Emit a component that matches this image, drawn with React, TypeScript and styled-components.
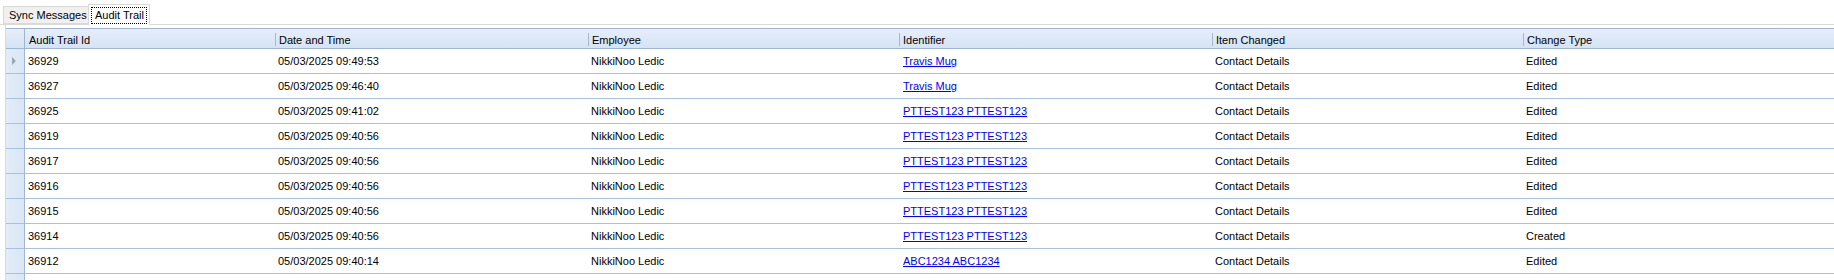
import React from "react";
import styled, { createGlobalStyle } from "styled-components";

const Global = createGlobalStyle`
  html, body { margin: 0; padding: 0; background: #ffffff; }
  body { font-family: "Liberation Sans", Arial, sans-serif; font-size: 11px; color: #000; }
  * { box-sizing: border-box; }
`;

const Page = styled.div`
  width: 1834px;
  height: 280px;
  overflow: hidden;
  background: #fff;
`;

const TabStrip = styled.div`
  display: flex;
  align-items: flex-end;
  height: 25px;
  padding-left: 3px;
  border-bottom: 1px solid #d9d9d9;
`;

const Tab = styled.div<{ $active?: boolean }>`
  display: flex;
  align-items: center;
  height: ${(p) => (p.$active ? "21px" : "18px")};
  margin-bottom: ${(p) => (p.$active ? "-1px" : "0")};
  padding: ${(p) => (p.$active ? "0 2px" : "0 0 0 5px")};
  width: ${(p) => (p.$active ? "62px" : "85px")};
  background: ${(p) => (p.$active ? "#ffffff" : "#f0f0f0")};
  border: 1px solid #d9d9d9;
  border-bottom: ${(p) => (p.$active ? "none" : "1px solid #d9d9d9")};
  border-left: ${(p) => (p.$active ? "1px solid #d9d9d9" : "1px solid #d9d9d9")};
  border-right: ${(p) => (p.$active ? "1px solid #d9d9d9" : "none")};
  color: #000;
  white-space: nowrap;
`;

const FocusLabel = styled.span`
  display: flex;
  align-items: center;
  height: 17px;
  padding: 0 4px;
  outline: 1px dotted #000;
  outline-offset: -1px;
  width: 100%;
`;

const Panel = styled.div`
  border-left: 1px solid #d9d9d9;
  margin-left: 5px;
  padding-top: 3px;
`;

const Grid = styled.div`
  display: grid;
  grid-template-columns: 19px 250px 313px 311px 313px 311px 311px;
`;

const HeaderCorner = styled.div`
  height: 21px;
  background: linear-gradient(#e6eefa, #d5e3f4);
  border-top: 1px solid #9fb5d3;
  border-bottom: 1px solid #9fb5d3;
  border-right: 1px solid #9fb5d3;
`;

const HeaderCell = styled.div<{ $sep?: boolean }>`
  position: relative;
  height: 21px;
  display: flex;
  align-items: center;
  padding: 2px 0 0 4px;
  background: linear-gradient(#e6eefa, #d5e3f4);
  border-top: 1px solid #9fb5d3;
  border-bottom: 1px solid #9fb5d3;
  white-space: nowrap;
  &::before {
    content: "";
    display: ${(p) => (p.$sep ? "block" : "none")};
    position: absolute;
    left: 0;
    top: 4px;
    width: 1px;
    height: 13px;
    background: #a8b6c8;
  }
`;

const RowHeader = styled.div`
  position: relative;
  height: 25px;
  background: linear-gradient(90deg, #e3ecf8, #d9e6f5);
  border-bottom: 1px solid #a9c1e0;
  border-right: 1px solid #9fb5d3;
`;

const Arrow = styled.span`
  position: absolute;
  left: 6px;
  top: 8px;
  width: 0;
  height: 0;
  border-top: 4px solid transparent;
  border-bottom: 4px solid transparent;
  border-left: 4px solid #9aa6b6;
`;

const Cell = styled.div`
  height: 25px;
  display: flex;
  align-items: center;
  padding: 0 0 0 3px;
  border-bottom: 1px solid #a9c1e0;
  white-space: nowrap;
  color: #000;
`;

const LinkText = styled.span`
  color: #0000ff;
  text-decoration: underline;
  padding-left: 1px;
`;

const EmptyCell = styled.div`
  height: 10px;
`;

const EmptyRowHeader = styled.div`
  height: 10px;
  background: linear-gradient(90deg, #e3ecf8, #d9e6f5);
  border-right: 1px solid #9fb5d3;
`;

type Row = {
  id: string;
  date: string;
  employee: string;
  identifier: string;
  item: string;
  change: string;
};

const rows: Row[] = [
  { id: "36929", date: "05/03/2025 09:49:53", employee: "NikkiNoo Ledic", identifier: "Travis Mug", item: "Contact Details", change: "Edited" },
  { id: "36927", date: "05/03/2025 09:46:40", employee: "NikkiNoo Ledic", identifier: "Travis Mug", item: "Contact Details", change: "Edited" },
  { id: "36925", date: "05/03/2025 09:41:02", employee: "NikkiNoo Ledic", identifier: "PTTEST123 PTTEST123", item: "Contact Details", change: "Edited" },
  { id: "36919", date: "05/03/2025 09:40:56", employee: "NikkiNoo Ledic", identifier: "PTTEST123 PTTEST123", item: "Contact Details", change: "Edited" },
  { id: "36917", date: "05/03/2025 09:40:56", employee: "NikkiNoo Ledic", identifier: "PTTEST123 PTTEST123", item: "Contact Details", change: "Edited" },
  { id: "36916", date: "05/03/2025 09:40:56", employee: "NikkiNoo Ledic", identifier: "PTTEST123 PTTEST123", item: "Contact Details", change: "Edited" },
  { id: "36915", date: "05/03/2025 09:40:56", employee: "NikkiNoo Ledic", identifier: "PTTEST123 PTTEST123", item: "Contact Details", change: "Edited" },
  { id: "36914", date: "05/03/2025 09:40:56", employee: "NikkiNoo Ledic", identifier: "PTTEST123 PTTEST123", item: "Contact Details", change: "Created" },
  { id: "36912", date: "05/03/2025 09:40:14", employee: "NikkiNoo Ledic", identifier: "ABC1234 ABC1234", item: "Contact Details", change: "Edited" },
];

const headers = ["Audit Trail Id", "Date and Time", "Employee", "Identifier", "Item Changed", "Change Type"];

export default function App() {
  return (
    <Page>
      <Global />
      <TabStrip>
        <Tab>Sync Messages</Tab>
        <Tab $active>
          <FocusLabel>Audit Trail</FocusLabel>
        </Tab>
      </TabStrip>
      <Panel>
        <Grid>
          <HeaderCorner />
          {headers.map((h, i) => (
            <HeaderCell key={h} $sep={i > 0}>{h}</HeaderCell>
          ))}
          {rows.map((r, i) => (
            <React.Fragment key={r.id}>
              <RowHeader>{i === 0 && <Arrow />}</RowHeader>
              <Cell>{r.id}</Cell>
              <Cell>{r.date}</Cell>
              <Cell>{r.employee}</Cell>
              <Cell><LinkText>{r.identifier}</LinkText></Cell>
              <Cell>{r.item}</Cell>
              <Cell>{r.change}</Cell>
            </React.Fragment>
          ))}
          <EmptyRowHeader />
          <EmptyCell />
          <EmptyCell />
          <EmptyCell />
          <EmptyCell />
          <EmptyCell />
          <EmptyCell />
        </Grid>
      </Panel>
    </Page>
  );
}
